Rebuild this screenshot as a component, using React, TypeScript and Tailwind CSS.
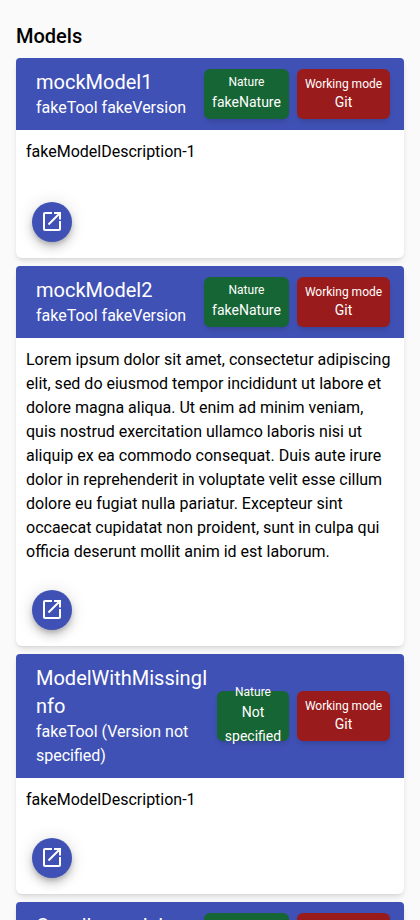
import React from "react";

type Model = {
  name: string;
  tool: string;
  nature: string;
  description: string;
  natureWidth: string;
};

const lorem =
  "Lorem ipsum dolor sit amet, consectetur adipiscing elit, sed do eiusmod tempor incididunt ut labore et dolore magna aliqua. Ut enim ad minim veniam, quis nostrud exercitation ullamco laboris nisi ut aliquip ex ea commodo consequat. Duis aute irure dolor in reprehenderit in voluptate velit esse cillum dolore eu fugiat nulla pariatur. Excepteur sint occaecat cupidatat non proident, sunt in culpa qui officia deserunt mollit anim id est laborum.";

const models: Model[] = [
  { name: "mockModel1", tool: "fakeTool fakeVersion", nature: "fakeNature", description: "fakeModelDescription-1", natureWidth: "w-[85px]" },
  { name: "mockModel2", tool: "fakeTool fakeVersion", nature: "fakeNature", description: lorem, natureWidth: "w-[85px]" },
  { name: "ModelWithMissingInfo", tool: "fakeTool (Version not specified)", nature: "Not specified", description: "fakeModelDescription-1", natureWidth: "w-[72px]" },
  { name: "Capella model", tool: "fakeTool fakeVersion", nature: "fakeNature", description: "fakeModelDescription-1", natureWidth: "w-[85px]" },
];

function ModelCard({ model }: { model: Model }) {
  return (
    <article className="flex min-h-[200px] shrink-0 flex-col rounded-md bg-white shadow-md">
      <header className="flex items-center justify-between rounded-t-sm bg-[#3f51b5] py-2.5 pr-3.5 pl-5 text-white">
        <div className="min-w-0 flex-1">
          <h2 className="text-xl leading-7 break-all">{model.name}</h2>
          <p className="text-base leading-6">{model.tool}</p>
        </div>
        <div className="ml-2 flex shrink-0 gap-2">
          <div className={`flex h-[50px] flex-col items-center justify-center rounded-md bg-[#166534] text-center shadow-md ${model.natureWidth}`}>
            <span className="text-xs">Nature</span>
            <span className="text-sm leading-6">{model.nature}</span>
          </div>
          <div className="flex h-[50px] w-[93px] flex-col items-center justify-center rounded-md bg-[#991b1b] text-center shadow-md">
            <span className="text-xs">Working mode</span>
            <span className="text-sm">Git</span>
          </div>
        </div>
      </header>
      <p className="mb-[26px] px-2.5 pt-2.5 text-base leading-6">{model.description}</p>
      <button
        aria-label="Open model"
        className="mt-auto mb-4 ml-4 flex size-10 items-center justify-center rounded-full bg-[#3f51b5] text-white shadow-[0_3px_5px_-1px_rgba(0,0,0,0.2),0_6px_10px_0_rgba(0,0,0,0.14),0_1px_18px_0_rgba(0,0,0,0.12)]"
      >
        <svg viewBox="0 0 24 24" className="size-6" fill="currentColor">
          <path d="M19 19H5V4h7V2H5c-1.11 0-2 .9-2 2v15c0 1.1.89 2 2 2h14c1.1 0 2-.9 2-2v-8h-2v8zM14 2v2h3.59l-9.83 9.83 1.41 1.41L19 5.41V9.5h2V2h-7z" />
        </svg>
      </button>
    </article>
  );
}

export default function App() {
  return (
    <main className="flex h-[920px] flex-col overflow-hidden bg-[#fafafa] px-4 pt-[22px] font-['Roboto',sans-serif] text-black">
      <h1 className="mb-2 shrink-0 text-xl leading-7 font-medium">Models</h1>
      <div className="flex flex-col gap-2">
        {models.map((model) => (
          <ModelCard key={model.name} model={model} />
        ))}
      </div>
    </main>
  );
}
